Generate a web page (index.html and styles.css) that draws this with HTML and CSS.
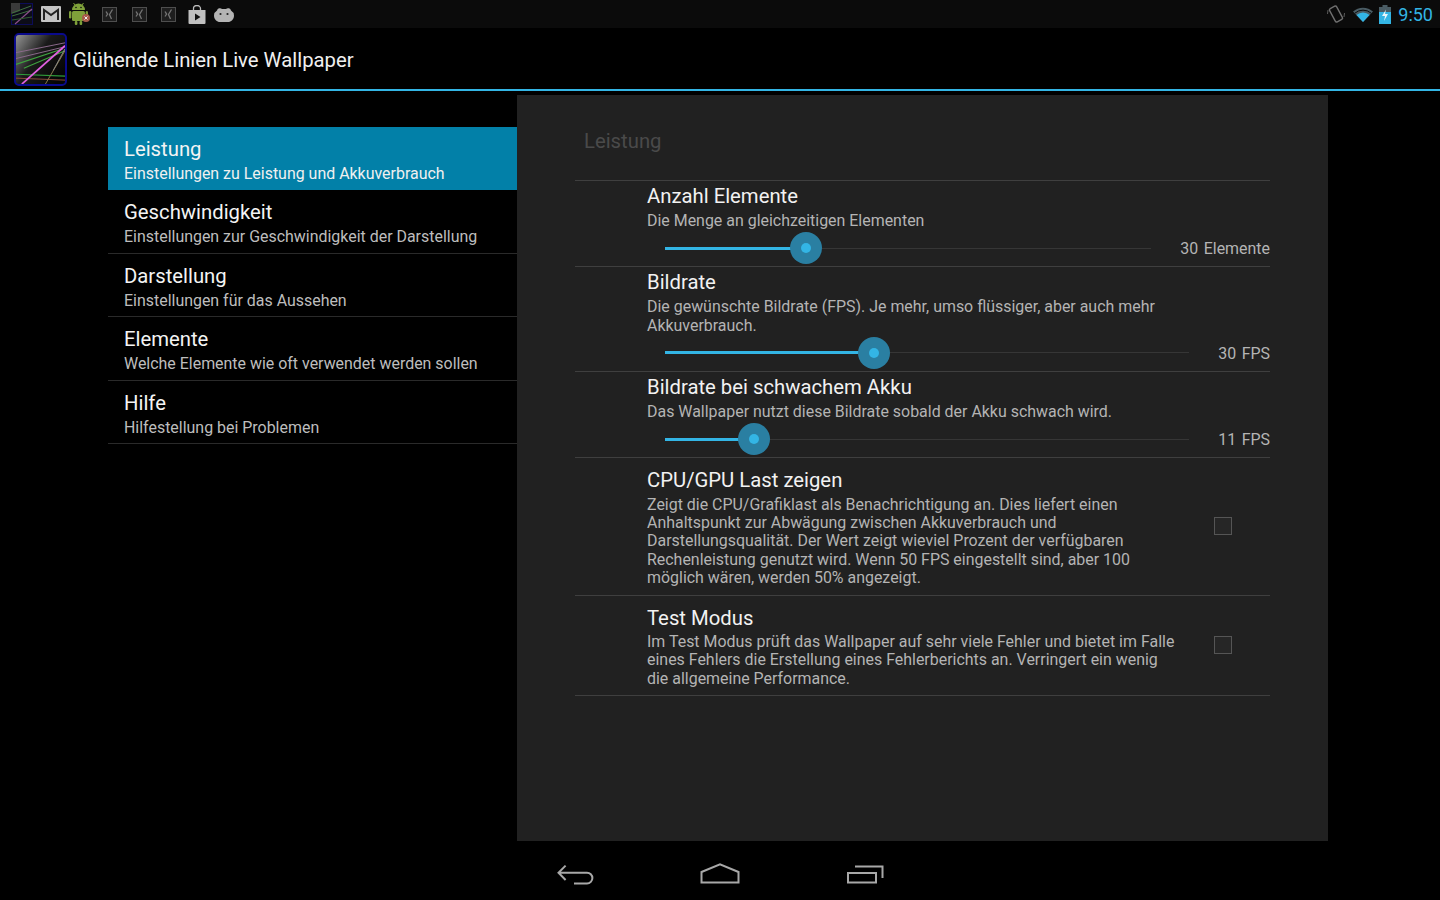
FILE: index.html
```html
<!DOCTYPE html>
<html lang="de">
<head>
    <meta charset="UTF-8">
    <title>Glühende Linien Live Wallpaper</title>
    <link rel="stylesheet" href="styles.css">
</head>
<body>
    <div class="status-bar">
        <div class="status-left">
            <svg class="note-icon" width="22" height="22" viewBox="0 0 22 22">
                <rect x="0.500" y="0.500" width="21" height="21" fill="#0c0c18" stroke="#0c0c58"/>
                <path d="M0 0H9V8L0 11z" fill="#3a3a3a"/>
                <path d="M1 10L20 3M1 13L21 7" stroke="#3f6f3f" stroke-width="1"/>
                <path d="M4 21L21 6" stroke="#8a4f8a" stroke-width="1.200"/>
                <path d="M1 17L21 14" stroke="#2f5a2f"/>
            </svg>
            <svg class="note-icon" width="20" height="16" viewBox="0 0 20 16">
                <rect width="20" height="16" rx="1" fill="#c4c4c4"/>
                <path d="M3 14V4L10 9L17 4V14" fill="none" stroke="#222" stroke-width="2"/>
            </svg>
            <svg class="note-icon" width="22" height="22" viewBox="0 0 22 22">
                <path d="M3 7a6.500 6.500 0 0 1 13 0z" fill="#7fa13a"/>
                <path d="M6 2L4.500 0M13 2l1.500-2" stroke="#7fa13a" stroke-width="1"/>
                <circle cx="7" cy="4.500" r="0.800" fill="#111"/>
                <circle cx="12" cy="4.500" r="0.800" fill="#111"/>
                <rect x="3" y="8" width="13" height="10" rx="1.500" fill="#7fa13a"/>
                <rect x="0" y="8" width="2.400" height="7.500" rx="1.200" fill="#7fa13a"/>
                <rect x="16.600" y="8" width="2.400" height="6" rx="1.200" fill="#7fa13a"/>
                <rect x="5.800" y="18" width="2.600" height="4" rx="1" fill="#7fa13a"/>
                <rect x="10.600" y="18" width="2.600" height="4" rx="1" fill="#7fa13a"/>
                <circle cx="17" cy="15" r="4" fill="#a85a4a"/>
                <path d="M15.500 13.500l3 3M18.500 13.500l-3 3" stroke="#eee" stroke-width="1"/>
            </svg>
            <svg class="note-icon xing" width="15" height="15" viewBox="0 0 15 15">
                <rect x="0.500" y="0.500" width="14" height="14" fill="#222" stroke="#5a5a5a"/>
                <path d="M4 4.500l1.600 2.600L4 9.500M10.500 2.500L7.500 7.500L9.500 12" fill="none" stroke="#888" stroke-width="1.300"/>
            </svg>
            <svg class="note-icon xing" width="15" height="15" viewBox="0 0 15 15">
                <rect x="0.500" y="0.500" width="14" height="14" fill="#222" stroke="#5a5a5a"/>
                <path d="M4 4.500l1.600 2.600L4 9.500M10.500 2.500L7.500 7.500L9.500 12" fill="none" stroke="#888" stroke-width="1.300"/>
            </svg>
            <svg class="note-icon xing" width="15" height="15" viewBox="0 0 15 15">
                <rect x="0.500" y="0.500" width="14" height="14" fill="#222" stroke="#5a5a5a"/>
                <path d="M4 4.500l1.600 2.600L4 9.500M10.500 2.500L7.500 7.500L9.500 12" fill="none" stroke="#888" stroke-width="1.300"/>
            </svg>
            <svg class="note-icon" width="18" height="19" viewBox="0 0 18 19">
                <path d="M5.500 5V3.500a3.500 3 0 0 1 7 0V5" fill="none" stroke="#bbb" stroke-width="1.300"/>
                <path d="M0.500 5H17.500V18a1 1 0 0 1-1 1H1.500a1 1 0 0 1-1-1z" fill="#c0c0c0"/>
                <path d="M7 8.500L12.500 12L7 15.500z" fill="#111"/>
            </svg>
            <svg class="note-icon" width="20" height="15" viewBox="0 0 20 15">
                <path d="M3 3.500a3 3 0 0 1 5-1.500h4a3 3 0 0 1 5 1.500a6 6 0 0 1 3 5c0 4-3 6.500-6 6.500H6c-3 0-6-2.500-6-6.500a6 6 0 0 1 3-5z" fill="#b4b4b4"/>
                <circle cx="6.500" cy="7" r="1.100" fill="#222"/>
                <circle cx="13.500" cy="7" r="1.100" fill="#222"/>
            </svg>
        </div>
        <div class="status-right">
            <svg class="vibrate-icon" width="18" height="20" viewBox="0 0 18 20">
                <rect x="5" y="2.500" width="8" height="15" rx="1.500" transform="rotate(-28 9 10)" fill="none" stroke="#707070" stroke-width="1.400"/>
                <path d="M1 6L0.500 10M17 13l.5-4" stroke="#5c5c5c" stroke-width="1"/>
            </svg>
            <svg width="20" height="15" viewBox="0 0 20 15">
                <path d="M0 4.500A15 15 0 0 1 20 4.500L10 15z" fill="#4a5c64"/>
                <path d="M3.500 8A9.500 9.500 0 0 1 16.500 8L10 15z" fill="#33b5e5"/>
                <path d="M1.800 6.200A12.500 12.500 0 0 1 18.200 6.200" fill="none" stroke="#0c0c0c" stroke-width="1"/>
            </svg>
            <svg width="12" height="19" viewBox="0 0 12 19">
                <rect x="3.500" y="0" width="5" height="3" fill="#4a5c64"/>
                <rect x="0" y="2" width="12" height="5" fill="#4a5c64"/>
                <rect x="0" y="7" width="12" height="12" fill="#33b5e5"/>
                <path d="M7 4.500L3 11H6L5 16L9 9H6z" fill="#e8f6fb"/>
            </svg>
            <span class="clock">9:50</span>
        </div>
    </div>

    <header class="action-bar">
        <svg class="app-icon" width="53" height="53" viewBox="0 0 54 54">
            <defs>
                <linearGradient id="iconGlow" x1="0" y1="0" x2="1" y2="0.700">
                    <stop offset="0" stop-color="#9a9a9a"/>
                    <stop offset="0.500" stop-color="#1a1a1a"/>
                    <stop offset="1" stop-color="#050505"/>
                </linearGradient>
                <clipPath id="iconClip"><rect x="2" y="2" width="50" height="50" rx="3"/></clipPath>
            </defs>
            <rect x="1" y="1" width="52" height="52" rx="4" fill="url(#iconGlow)" stroke="#0a0a8c" stroke-width="2"/>
            <g clip-path="url(#iconClip)" fill="none">
                <path d="M2 20L52 10M2 26L52 14" stroke="#8c6a8c" stroke-width="1"/>
                <path d="M2 32L50 16M10 36L52 18" stroke="#3fa03f" stroke-width="1.200"/>
                <path d="M2 42L52 44" stroke="#2f9a3a" stroke-width="1.200"/>
                <path d="M2 46L52 48" stroke="#8a4a3a" stroke-width="1"/>
                <path d="M8 52L52 13" stroke="#e060e0" stroke-width="1.800"/>
                <path d="M32 52L52 18" stroke="#8a7a4a" stroke-width="1"/>
                <path d="M40 38L52 16" stroke="#888" stroke-width="1"/>
            </g>
        </svg>
        <h1 class="app-title">Glühende Linien Live Wallpaper</h1>
    </header>

    <main class="content">
        <nav class="headers">
            <div class="header-item selected">
                <div class="item-title">Leistung</div>
                <div class="item-sub">Einstellungen zu Leistung und Akkuverbrauch</div>
            </div>
            <div class="header-item">
                <div class="item-title">Geschwindigkeit</div>
                <div class="item-sub">Einstellungen zur Geschwindigkeit der Darstellung</div>
            </div>
            <div class="header-item">
                <div class="item-title">Darstellung</div>
                <div class="item-sub">Einstellungen für das Aussehen</div>
            </div>
            <div class="header-item">
                <div class="item-title">Elemente</div>
                <div class="item-sub">Welche Elemente wie oft verwendet werden sollen</div>
            </div>
            <div class="header-item">
                <div class="item-title">Hilfe</div>
                <div class="item-sub">Hilfestellung bei Problemen</div>
            </div>
        </nav>

        <section class="panel">
            <h2 class="panel-title">Leistung</h2>
            <div class="prefs">
                <div class="pref pref-slider">
                    <div class="pref-title">Anzahl Elemente</div>
                    <div class="pref-sub">Die Menge an gleichzeitigen Elementen</div>
                    <div class="slider-row">
                        <div class="slider">
                            <div class="track"></div>
                            <div class="fill" style="width: 141px"></div>
                            <div class="thumb" style="left: 141px"></div>
                        </div>
                        <span class="slider-value">30 Elemente</span>
                    </div>
                </div>
                <div class="pref pref-slider">
                    <div class="pref-title">Bildrate</div>
                    <div class="pref-sub">Die gewünschte Bildrate (FPS). Je mehr, umso flüssiger, aber auch mehr Akkuverbrauch.</div>
                    <div class="slider-row">
                        <div class="slider">
                            <div class="track"></div>
                            <div class="fill" style="width: 209px"></div>
                            <div class="thumb" style="left: 209px"></div>
                        </div>
                        <span class="slider-value">30 FPS</span>
                    </div>
                </div>
                <div class="pref pref-slider">
                    <div class="pref-title">Bildrate bei schwachem Akku</div>
                    <div class="pref-sub">Das Wallpaper nutzt diese Bildrate sobald der Akku schwach wird.</div>
                    <div class="slider-row">
                        <div class="slider">
                            <div class="track"></div>
                            <div class="fill" style="width: 89px"></div>
                            <div class="thumb" style="left: 89px"></div>
                        </div>
                        <span class="slider-value">11 FPS</span>
                    </div>
                </div>
                <div class="pref pref-check">
                    <div class="check-text">
                        <div class="pref-title">CPU/GPU Last zeigen</div>
                        <div class="pref-sub">Zeigt die CPU/Grafiklast als Benachrichtigung an. Dies liefert einen Anhaltspunkt zur Abwägung zwischen Akkuverbrauch und Darstellungsqualität. Der Wert zeigt wieviel Prozent der verfügbaren Rechenleistung genutzt wird. Wenn 50 FPS eingestellt sind, aber 100 möglich wären, werden 50% angezeigt.</div>
                    </div>
                    <div class="checkbox"></div>
                </div>
                <div class="pref pref-check">
                    <div class="check-text">
                        <div class="pref-title">Test Modus</div>
                        <div class="pref-sub">Im Test Modus prüft das Wallpaper auf sehr viele Fehler und bietet im Falle eines Fehlers die Erstellung eines Fehlerberichts an. Verringert ein wenig die allgemeine Performance.</div>
                    </div>
                    <div class="checkbox"></div>
                </div>
            </div>
        </section>
    </main>

    <footer class="nav-bar">
        <svg width="40" height="24" viewBox="0 0 40 24">
            <path d="M9.600 2.600L2.500 9.700L9.600 17M2.500 9.700H31a5.400 5.400 0 0 1 0 10.800H18" fill="none" stroke="#a8a8a8" stroke-width="2"/>
        </svg>
        <svg width="40" height="24" viewBox="0 0 40 24">
            <path d="M1.500 9L20 1.300L38.500 9V19.500H1.500z" fill="none" stroke="#a8a8a8" stroke-width="2"/>
        </svg>
        <svg class="recents" width="40" height="24" viewBox="0 0 40 24">
            <path d="M2 10H30V19.500H2zM9 3.500H36.500V15" fill="none" stroke="#a8a8a8" stroke-width="2"/>
        </svg>
    </footer>
</body>
</html>
```

FILE: styles.css
```css
body {
    margin: 0;
    width: 1440px;
    height: 900px;
    overflow: hidden;
    display: flex;
    flex-direction: column;
    background: #000;
    color: #fff;
    font-family: Roboto, "Liberation Sans", sans-serif;
}

.status-bar {
    height: 28px;
    display: flex;
    justify-content: space-between;
    align-items: center;
    background: #0b0b0b;
    flex-shrink: 0;
}

.status-left {
    display: flex;
    align-items: center;
    margin-left: 11px;
}

.note-icon {
    margin-right: 8px;
    display: block;
}

.note-icon.xing {
    margin-left: 3px;
    margin-right: 11.500px;
    opacity: 0.85;
}

.status-right {
    display: flex;
    align-items: center;
    gap: 6px;
    margin-right: 7px;
}

.vibrate-icon {
    margin-right: 2px;
}

.clock {
    font-size: 18px;
    color: #33b5e5;
    margin-left: 1px;
}

.action-bar {
    height: 61px;
    display: flex;
    align-items: center;
    padding-left: 14px;
    border-bottom: 2px solid #33b5e5;
    flex-shrink: 0;
}

.app-icon {
    display: block;
    margin-top: 2px;
}

.app-title {
    margin: 3px 0 0 6px;
    font-size: 20.300px;
    font-weight: 400;
    color: #f0f0f0;
}

.content {
    flex: 1;
    display: flex;
    align-items: flex-start;
    padding: 4px 0 0 108px;
}

.headers {
    width: 409px;
    margin-top: 32px;
}

.header-item {
    height: 63.600px;
    box-sizing: border-box;
    padding: 9px 0 0 16px;
    border-bottom: 1px solid #2a2a2a;
}

.header-item.selected {
    height: 63px;
    background: #0280a8;
    border-bottom: none;
}

.item-title {
    font-size: 20.300px;
    line-height: 27px;
    color: #f4f4f4;
}

.item-sub {
    font-size: 15.950px;
    line-height: 20px;
    margin-top: 1px;
    color: #bdbdbd;
}

.selected .item-sub {
    color: #f0f0f0;
}

.panel {
    width: 811px;
    height: 746px;
    box-sizing: border-box;
    background: #212121;
    padding: 33px 58px 0 58px;
}

.panel-title {
    margin: 0 0 26px 9px;
    font-size: 20.300px;
    line-height: 26px;
    font-weight: 400;
    color: #4a4a4a;
}

.prefs {
    border-top: 1px solid #3f3f3f;
}

.pref {
    box-sizing: border-box;
    border-bottom: 1px solid #3f3f3f;
    padding-left: 72px;
}

.pref-title {
    font-size: 20.300px;
    line-height: 27px;
    color: #f2f2f2;
}

.pref-sub {
    font-size: 15.950px;
    line-height: 18.400px;
    margin-top: 1.500px;
    color: #b4b4b4;
}

.pref-slider {
    padding-top: 2px;
}

.pref-slider .pref-sub {
    width: 540px;
    margin-top: 2px;
}

.slider-row {
    display: flex;
    align-items: center;
    height: 35.800px;
}

.slider {
    position: relative;
    flex: 1;
    height: 32px;
    margin: 0 29px 0 18px;
}

.track {
    position: absolute;
    left: 0;
    right: 0;
    top: 15.500px;
    height: 1px;
    background: #363636;
}

.fill {
    position: absolute;
    left: 0;
    top: 14.500px;
    height: 3px;
    background: #33b5e5;
}

.thumb {
    position: absolute;
    top: 0;
    width: 32px;
    height: 32px;
    margin-left: -16px;
    border-radius: 50%;
    background: #2a7fa2;
}

.thumb::after {
    content: "";
    position: absolute;
    left: 11px;
    top: 11px;
    width: 10px;
    height: 10px;
    border-radius: 50%;
    background: #33b5e5;
}

.slider-value {
    font-size: 15.950px;
    color: #b4b4b4;
    word-spacing: 1.500px;
    white-space: nowrap;
    padding-top: 1px;
}

.pref-check {
    display: flex;
    align-items: center;
    justify-content: space-between;
    padding-top: 9px;
    padding-bottom: 7px;
    padding-right: 38px;
}

.check-text {
    width: 530px;
}

.checkbox {
    width: 16px;
    height: 16px;
    margin-bottom: 2px;
    border: 1px solid #555;
    background: #262626;
}

.nav-bar {
    height: 59px;
    box-sizing: border-box;
    padding: 8px 0 0 556px;
    display: flex;
    align-items: center;
    gap: 104px;
    flex-shrink: 0;
}

.recents {
    margin-left: 2px;
}
```
